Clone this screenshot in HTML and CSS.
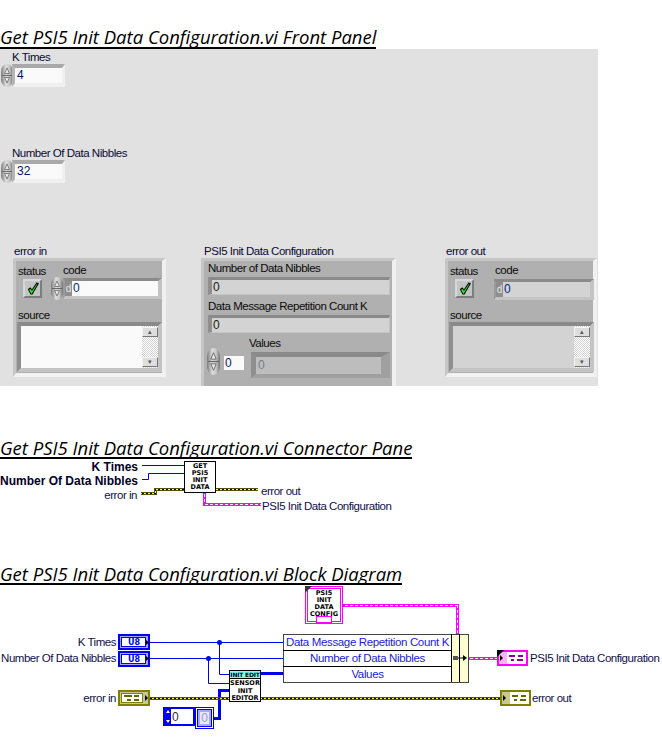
FILE: index.html
```html
<!DOCTYPE html>
<html lang="en">
<head>
<meta charset="utf-8">
<title>Get PSI5 Init Data Configuration.vi</title>
<link rel="stylesheet" href="styles.css">
</head>
<body>
<svg class="sprites" width="0" height="0" aria-hidden="true">
  <defs>
    <linearGradient id="spinGrad" x1="0" x2="1" y1="0" y2="0">
      <stop offset="0" stop-color="#7c7c7c"/><stop offset=".4" stop-color="#dcdcdc"/><stop offset=".7" stop-color="#c8c8c8"/><stop offset="1" stop-color="#707070"/>
    </linearGradient>
    <pattern id="pinkH" patternUnits="userSpaceOnUse" width="5" height="1"><rect width="5" height="1" fill="#ff00ff"/><rect width="3" height="1" fill="#fff"/></pattern>
    <pattern id="pinkV" patternUnits="userSpaceOnUse" width="1" height="5"><rect width="1" height="5" fill="#ff00ff"/><rect width="1" height="3" fill="#fff"/></pattern>
    <pattern id="errH" patternUnits="userSpaceOnUse" width="4" height="1"><rect width="4" height="1" fill="#000"/><rect width="2" height="1" fill="#ffff33"/></pattern>
    <pattern id="errV" patternUnits="userSpaceOnUse" width="1" height="4"><rect width="1" height="4" fill="#000"/><rect width="1" height="2" fill="#ffff33"/></pattern>
    <symbol id="spin" viewBox="0 0 12 23" preserveAspectRatio="none">
      <path d="M6 0C2 0 0 4 0 8v7c0 4 2 8 6 8s6-4 6-8V8c0-4-2-8-6-8z" fill="url(#spinGrad)"/>
      <path d="M1 11.500h10" stroke="#666" stroke-width="1"/>
      <path d="M6 4L3.500 9.500h5z" fill="#e8e8e8" stroke="#666" stroke-width=".8"/>
      <path d="M6 19L3.500 13.500h5z" fill="#e8e8e8" stroke="#666" stroke-width=".8"/>
    </symbol>
    <symbol id="check" viewBox="0 0 12 13">
      <path d="M1.500 7.500L3.200 6 5 8.200 9.800 1 11.200 1.800 5.200 12H3.800z" fill="#19ff19" stroke="#000" stroke-width="1.100"/>
    </symbol>
  </defs>
</svg>

<section class="sec sec-front">
  <h2 class="heading">Get PSI5 Init Data Configuration.vi Front Panel</h2>
  <div class="panel">
    <div class="lbl l-k">K Times</div>
    <svg class="spin s-k"><use href="#spin"/></svg>
    <div class="numctl n-k"><div class="num-in">4</div></div>
    <div class="lbl l-n">Number Of Data Nibbles</div>
    <svg class="spin s-n"><use href="#spin"/></svg>
    <div class="numctl n-n"><div class="num-in">32</div></div>

    <div class="lbl l-ei">error in</div>
    <div class="cluster c-ei">
      <div class="lbl in-status">status</div>
      <div class="lbl in-code">code</div>
      <div class="checkbtn in-check"><svg class="chk"><use href="#check"/></svg></div>
      <svg class="spin in-spin"><use href="#spin"/></svg>
      <div class="codefrm in-codefrm"><span class="radix">d</span><div class="codeval val-white">0</div></div>
      <div class="lbl in-source">source</div>
      <div class="srcfrm in-src">
        <div class="srcbox val-white"></div>
        <div class="sbar"><div class="sbtn">▴</div><div class="sbtn">▾</div></div>
      </div>
    </div>

    <div class="lbl l-cfg">PSI5 Init Data Configuration</div>
    <div class="cluster c-cfg">
      <div class="lbl cfg-l1">Number of Data Nibbles</div>
      <div class="indfrm cfg-f1"><div class="indval">0</div></div>
      <div class="lbl cfg-l2">Data Message Repetition Count K</div>
      <div class="indfrm cfg-f2"><div class="indval">0</div></div>
      <svg class="spin cfg-spin"><use href="#spin"/></svg>
      <div class="cfg-idx">0</div>
      <div class="lbl cfg-l3">Values</div>
      <div class="arrfrm"><div class="arrval">0</div></div>
    </div>

    <div class="lbl l-eo">error out</div>
    <div class="cluster c-eo">
      <div class="lbl out-status">status</div>
      <div class="lbl out-code">code</div>
      <div class="checkbtn out-check"><svg class="chk"><use href="#check"/></svg></div>
      <div class="codefrm out-codefrm"><span class="radix">d</span><div class="codeval val-grey">0</div></div>
      <div class="lbl out-source">source</div>
      <div class="srcfrm out-src">
        <div class="srcbox val-grey"></div>
        <div class="sbar"><div class="sbtn">▴</div><div class="sbtn">▾</div></div>
      </div>
    </div>
  </div>
</section>

<section class="sec sec-conn">
  <h2 class="heading">Get PSI5 Init Data Configuration.vi Connector Pane</h2>
  <div class="canvas canvas-conn">
    <svg class="wires" viewBox="0 460 662 104" width="662" height="104" fill="none">
      <path d="M142 466.500H185" stroke="#0000f0"/>
      <path d="M142 480.500H148.500V474.500H185" stroke="#0000f0"/>
      <g fill="#55550a">
        <rect x="141" y="493" width="16" height="3"/><rect x="154" y="489" width="3" height="7"/><rect x="154" y="489" width="31" height="3"/>
        <rect x="215" y="489" width="43" height="3"/>
      </g>
      <g fill="url(#errH)">
        <rect x="141" y="494" width="15" height="1"/><rect x="155" y="490" width="30" height="1"/><rect x="215" y="490" width="43" height="1"/>
      </g>
      <rect x="155" y="490" width="1" height="5" fill="url(#errV)"/>
      <g fill="#ff00ff">
        <rect x="203" y="493" width="3" height="14"/><rect x="203" y="504" width="58" height="3"/>
      </g>
      <rect x="204" y="493" width="1" height="12" fill="url(#pinkV)"/>
      <rect x="204" y="505" width="57" height="1" fill="url(#pinkH)"/>
    </svg>
    <div class="tl pin-k">K Times</div>
    <div class="tl pin-n">Number Of Data Nibbles</div>
    <div class="tn pin-e">error in</div>
    <div class="vi vi-get">GET<br>PSI5<br>INIT<br>DATA</div>
    <div class="tn pin-eo">error out</div>
    <div class="tn pin-cfg">PSI5 Init Data Configuration</div>
  </div>
</section>

<section class="sec sec-block">
  <h2 class="heading">Get PSI5 Init Data Configuration.vi Block Diagram</h2>
  <div class="canvas canvas-block">
    <svg class="wires" viewBox="0 585 662 170" width="662" height="170" fill="none">
      <path d="M150 642.500H283M150 658.500H283M219.500 642V674.500H230M208.500 658V683.500H230" stroke="#0000f0"/>
      <circle cx="219.500" cy="642.500" r="2.500" fill="#0000f0"/>
      <circle cx="208.500" cy="658.500" r="2.500" fill="#0000f0"/>
      <path d="M260 673.500H283" stroke="#0000f0" stroke-width="3"/>
      <path d="M213 718.500H219.500V690.500H230" stroke="#0000f0" stroke-width="3"/>
      <rect x="150" y="697" width="350" height="3" fill="#55550a"/>
      <rect x="150" y="698" width="350" height="1" fill="url(#errH)"/>
      <g fill="#ff00ff">
        <rect x="343" y="604" width="116" height="3"/><rect x="456" y="604" width="3" height="30"/>
        <rect x="468" y="657" width="29" height="3"/>
      </g>
      <rect x="343" y="605" width="114" height="1" fill="url(#pinkH)"/>
      <rect x="457" y="605" width="1" height="29" fill="url(#pinkV)"/>
      <rect x="468" y="658" width="29" height="1" fill="url(#pinkH)"/>

      <!-- numeric terminals -->
      <g>
        <rect x="118.500" y="634.500" width="31" height="15" fill="#a6a6ff" stroke="#0000f0"/>
        <rect x="119.500" y="635.500" width="29" height="13" fill="none" stroke="#0000f0"/>
        <rect x="121.500" y="637.500" width="24" height="9" fill="#fff" stroke="#0000f0"/>
        <path d="M146 640l3 2.500-3 2.500z" fill="#000"/>
        <rect x="118.500" y="651.500" width="31" height="15" fill="#a6a6ff" stroke="#0000f0"/>
        <rect x="119.500" y="652.500" width="29" height="13" fill="none" stroke="#0000f0"/>
        <rect x="121.500" y="654.500" width="24" height="9" fill="#fff" stroke="#0000f0"/>
        <path d="M146 656l3 2.500-3 2.500z" fill="#000"/>
      </g>
      <!-- error in terminal -->
      <g>
        <rect x="118.500" y="690.500" width="31" height="15" fill="#c8c88c" stroke="#808000"/>
        <rect x="119.500" y="691.500" width="29" height="13" fill="none" stroke="#808000"/>
        <rect x="121.500" y="693.500" width="21" height="9" fill="#fff" stroke="#808000"/>
        <path d="M124 695h8v2h-8zM134 695h5v2h-5zM127 699h4v2h-4zM134 699h5v2h-5z" fill="#666600"/>
        <path d="M145 695l3 3-3 3z" fill="#000"/>
      </g>
      <!-- error out terminal -->
      <g>
        <rect x="500.500" y="690.500" width="30" height="15" fill="#fff" stroke="#808000"/>
        <rect x="501.500" y="691.500" width="28" height="13" fill="none" stroke="#808000"/>
        <rect x="502" y="692" width="8" height="12" fill="#c8c88c"/>
        <path d="M512 695h6v2h-6zM521 695h5v2h-5zM514 699h3v2h-3zM520 699h6v2h-6z" fill="#666600"/>
        <path d="M503 695l3 3-3 3z" fill="#000"/>
      </g>
      <!-- cluster indicator -->
      <g>
        <rect x="497.500" y="650.500" width="30" height="15" fill="#fff" stroke="#ff00ff"/>
        <rect x="498.500" y="651.500" width="28" height="13" fill="none" stroke="#ff00ff"/>
        <rect x="499" y="652" width="8" height="12" fill="#ffb0ff"/>
        <path d="M509 655h6v2h-6zM518 655h5v2h-5zM511 659h3v2h-3zM517 659h6v2h-6z" fill="#900090"/>
        <path d="M497 650h7l-7 7z" fill="#000"/>
        <path d="M500 655l3 3-3 3z" fill="#000"/>
      </g>
      <!-- cluster constant -->
      <g>
        <rect x="305.500" y="586.500" width="37" height="37" fill="#fff" stroke="#ff00ff"/>
        <rect x="307.500" y="588.500" width="33" height="33" fill="none" stroke="#ff00ff"/>
        <rect x="316.500" y="616.500" width="15" height="6" fill="#fff" stroke="#ff00ff"/>
        <path d="M305 586h7l-7 7z" fill="#333"/>
      </g>
      <!-- array constant -->
      <g>
        <rect x="163.500" y="707.500" width="31" height="18" fill="#fff" stroke="#0000f0"/>
        <rect x="164.500" y="708.500" width="29" height="16" fill="none" stroke="#0000f0"/>
        <rect x="165" y="709" width="6" height="15" fill="#0000f0"/>
        <path d="M168 710l2 3h-4zM168 723l2-3h-4z" fill="#fff"/>
        <rect x="195.500" y="707.500" width="18" height="21" fill="#fff" stroke="#0000f0"/>
        <rect x="197.500" y="709.500" width="14" height="17" fill="#a6a6ff" stroke="#0000f0"/>
        <rect x="199.500" y="711.500" width="10" height="13" fill="#e8e8ff" stroke="#a6a6ff"/>
      </g>
      <!-- bundle node -->
      <g>
        <rect x="283.500" y="634.500" width="185" height="48" fill="#fff" stroke="#444"/>
        <rect x="452" y="635" width="16" height="47" fill="#ffffd2"/>
        <path d="M283 650.500H452M283 666.500H452M451.500 634V682M459.500 634V682" stroke="#000"/>
        <path d="M453 656h5v4h-5z" fill="#555"/>
        <path d="M458 657.500h5V655l4 3-4 3v-2.500h-5z" fill="#000"/>
      </g>
    </svg>
    <div class="tn bd-k">K Times</div>
    <div class="tn bd-n">Number Of Data Nibbles</div>
    <div class="tn bd-e">error in</div>
    <div class="term-txt bd-u1">U8</div>
    <div class="term-txt bd-u2">U8</div>
    <div class="cfg-ic">PSI5<br>INIT<br>DATA<br>CONFIG</div>
    <div class="bnd bnd-1">Data Message Repetition Count K</div>
    <div class="bnd bnd-2">Number of Data Nibbles</div>
    <div class="bnd bnd-3">Values</div>
    <div class="tn bd-cfg">PSI5 Init Data Configuration</div>
    <div class="tn bd-eo">error out</div>
    <div class="vi-ed">
      <div class="vi-ed-top">INIT EDIT</div>
      <div class="vi-ed-body">SENSOR<br>INIT<br>EDITOR</div>
    </div>
    <div class="arr-idx">0</div>
    <div class="arr-val">0</div>
  </div>
</section>
</body>
</html>
```
FILE: styles.css
```css
* { box-sizing: border-box; }
html, body { margin: 0; padding: 0; background: #fff; }
body { width: 662px; height: 755px; overflow: hidden; font-family: "Liberation Sans", Arial, sans-serif; font-size: 12px; color: #000; }
.sprites { position: absolute; }

.sec { font-size: 0; }
.sec > * { font-size: 12px; }
.sec-front { padding-top: 28px; }
.sec-conn { margin-top: 51px; }
.sec > .heading {
  display: inline-block; vertical-align: top; margin: 0; height: 21px;
  font: italic 400 18.5px/17px "Open Sans", sans-serif;
  border-bottom: 2px solid #000; color: #000; white-space: nowrap;
}
.sec-conn > .heading, .sec-block > .heading { height: 22px; padding-top: 2px; }

/* Front panel: free canvas of controls */
.panel { position: relative; width: 598px; height: 337px; background: #e1e1e1; overflow: hidden; }
.lbl, .tn { font-size: 11.5px; letter-spacing: -.47px; }
.bnd { font-size: 11.5px; letter-spacing: -.35px; }
.lbl { position: absolute; line-height: 13px; color: #0a0a32; white-space: nowrap; }
.spin { position: absolute; width: 12px; height: 23px; }
.l-k { left: 12px; top: 2px; }
.s-k { left: 1px; top: 15px; }
.n-k { top: 15px; }
.l-n { left: 12px; top: 98px; }
.s-n { left: 1px; top: 111px; }
.n-n { top: 111px; }
.numctl {
  position: absolute; left: 12px; width: 53px; height: 23px;
  border-style: solid; border-width: 4px 3px 4px 3px; border-color: #a9a9a9 #f0f0f0 #f0f0f0 #b5b5b5;
}
.num-in { height: 15px; background: #fafafa; font-size: 12px; line-height: 15px; padding-left: 2px; color: #001a66; }

.cluster {
  position: absolute; background: #b0b0b0;
  border-style: solid; border-width: 3px 4px 4px 3px; border-color: #c6c6c6 #f0f0f0 #f2f2f2 #c6c6c6;
}
.l-ei { left: 14px; top: 196px; }
.c-ei { left: 13px; top: 209px; width: 153px; height: 119px; }
.l-cfg { left: 204px; top: 196px; }
.c-cfg { left: 201px; top: 209px; width: 195px; height: 140px; }
.l-eo { left: 446px; top: 196px; }
.c-eo { left: 445px; top: 209px; width: 152px; height: 119px; }
.cluster .lbl { color: #0a0a0a; }

.in-status { left: 2px; top: 4px; }
.in-code { left: 47px; top: 3px; }
.in-check { left: 7px; top: 18px; }
.in-spin { left: 35px; top: 16px; }
.in-codefrm { left: 47px; top: 17px; width: 99px; }
.in-source { left: 2px; top: 48px; }
.in-src { left: 1px; top: 61px; width: 145px; }
.out-status { left: 2px; top: 4px; }
.out-code { left: 47px; top: 3px; }
.out-check { left: 7px; top: 18px; }
.out-codefrm { left: 46px; top: 18px; width: 100px; }
.out-source { left: 2px; top: 48px; }
.out-src { left: 1px; top: 61px; width: 145px; }

.checkbtn {
  position: absolute; width: 19px; height: 19px; background: #c4c4c4; display: flex; align-items: center; justify-content: center;
  border-style: solid; border-width: 2px; border-color: #d8d8d8 #7d7d7d #7d7d7d #d8d8d8;
}
.chk { width: 12px; height: 13px; display: block; }

.codefrm {
  position: absolute; height: 21px; display: flex;
  border-style: solid; border-width: 3px 4px 3px 2px; border-color: #8a8a8a #c4c4c4 #c4c4c4 #9a9a9a;
}
.radix { width: 7px; background: #8e8e8e; color: #e6e6e6; font-size: 10px; line-height: 15px; text-align: center; flex: none; }
.codeval { flex: 1; font-size: 12px; line-height: 15px; color: #002a88; padding-left: 1px; }
.val-white { background: #fafafa; }
.val-grey { background: #d3d3d3; }

.srcfrm {
  position: absolute; height: 50px; display: flex;
  border-style: solid; border-width: 4px; border-color: #8a8a8a #c4c4c4 #c4c4c4 #8f8f8f;
}
.srcbox { flex: 1; }
.sbar {
  width: 16px; flex: none; display: flex; flex-direction: column; justify-content: space-between;
  background: repeating-conic-gradient(#fff 0 25%, #d4d4d4 0 50%) 0 0 / 2px 2px; padding: 1px 0;
}
.sbtn {
  height: 10px; background: #dedede; font-size: 7px; line-height: 8px; text-align: center; color: #555;
  border-style: solid; border-width: 1px; border-color: #f4f4f4 #777 #777 #f4f4f4;
}

.indfrm {
  position: absolute; left: 4px; width: 182px; height: 18px;
  border-style: solid; border-width: 3px 1px 1px 4px; border-color: #8a8a8a #c4c4c4 #c4c4c4 #8f8f8f;
}
.indval { height: 14px; background: #d3d3d3; font-size: 12px; line-height: 14px; color: #1a1a1a; padding-left: 1px; }
.cfg-l1 { left: 4px; top: 1px; }
.cfg-f1 { top: 16px; }
.cfg-l2 { left: 4px; top: 39px; }
.cfg-f2 { top: 54px; }
.c-cfg .cfg-spin { left: 3px; top: 87px; width: 13px; height: 27px; }
.cfg-idx { position: absolute; left: 20px; top: 95px; width: 20px; height: 14px; background: #fafafa; font-size: 12px; line-height: 14px; padding-left: 1px; color: #001a66; }
.cfg-l3 { left: 45px; top: 76px; }
.arrfrm {
  position: absolute; left: 47px; top: 91px; width: 139px; height: 26px;
  border-style: solid; border-width: 5px 9px 4px 5px; border-color: #8a8a8a #a0a0a0 #a0a0a0 #8f8f8f;
}
.arrval { height: 17px; background: #bdbdbd; font-size: 12px; line-height: 17px; padding-left: 2px; color: #6f7f8f; }

/* Diagrams: free canvases */
.canvas { position: relative; width: 662px; }
.canvas-conn { height: 104px; }
.canvas-block { height: 170px; }
.wires { position: absolute; left: 0; top: 0; display: block; }

.tl { position: absolute; right: 524px; font-size: 12px; font-weight: 700; line-height: 14px; color: #00002a; white-space: nowrap; }
.tn { position: absolute; line-height: 13px; color: #10104a; white-space: nowrap; }
.pin-k { top: 1px; }
.pin-n { top: 15px; }
.pin-e { right: 525px; top: 30px; }
.pin-eo { left: 261px; top: 26px; }
.pin-cfg { left: 262px; top: 41px; }
.vi {
  position: absolute; left: 184px; top: 2px; width: 32px; height: 32px; background: #fff; border: 1px solid #000;
  font: 700 6.5px/7px "DejaVu Sans", sans-serif; text-align: center; padding-top: 1px; color: #000;
}

.bd-k { right: 546px; top: 51px; }
.bd-n { right: 546px; top: 67px; }
.bd-e { right: 546px; top: 107px; }
.term-txt { position: absolute; left: 122px; width: 24px; text-align: center; font: 700 8px/9px "DejaVu Sans", sans-serif; color: #0000f0; }
.bd-u1 { top: 53px; }
.bd-u2 { top: 70px; }
.cfg-ic { position: absolute; left: 309px; top: 5px; width: 30px; text-align: center; font: 700 6.5px/7px "DejaVu Sans", sans-serif; color: #000; }
.bnd { position: absolute; left: 284px; width: 167px; text-align: center; line-height: 15px; color: #1a1ae0; white-space: nowrap; }
.bnd-1 { top: 50px; }
.bnd-2 { top: 66px; }
.bnd-3 { top: 82px; }
.bd-cfg { left: 530px; top: 67px; }
.bd-eo { left: 532px; top: 107px; }
.vi-ed { position: absolute; left: 229px; top: 85px; width: 32px; height: 32px; border: 1px solid #000; background: #fff; text-align: center; }
.vi-ed-top { height: 8px; background: #7fffff; border-bottom: 1px solid #000; font: 700 6px/7px "DejaVu Sans", sans-serif; letter-spacing: -.2px; color: #000; white-space: nowrap; overflow: hidden; }
.vi-ed-body { font: 700 6.5px/7.5px "DejaVu Sans", sans-serif; color: #000; padding-top: 1px; }
.arr-idx { position: absolute; left: 172px; top: 125px; font-size: 12px; line-height: 14px; color: #333; }
.arr-val { position: absolute; left: 200px; top: 127px; width: 9px; text-align: center; font-size: 12px; line-height: 13px; color: #9a9ad0; }
```
